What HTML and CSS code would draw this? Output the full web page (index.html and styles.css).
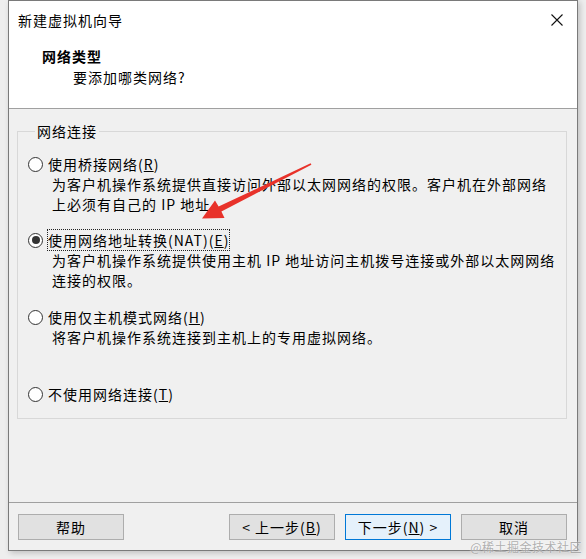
FILE: index.html
```html
<!DOCTYPE html>
<html lang="zh-CN">
<head>
<meta charset="utf-8">
<title>新建虚拟机向导</title>
<link rel="stylesheet" href="styles.css">
</head>
<body>
<div class="window">
  <div class="top">
    <div class="titlebar">
      <span class="title">新建虚拟机向导</span>
      <svg class="close" width="12" height="12" viewBox="0 0 12 12"><path d="M0.5 0.5 L11.5 11.5 M11.5 0.5 L0.5 11.5" stroke="#111" stroke-width="1.1" fill="none"/></svg>
    </div>
    <div class="header">
      <div class="h-title">网络类型</div>
      <div class="h-sub">要添加哪类网络?</div>
    </div>
  </div>
  <div class="body">
    <fieldset class="group">
      <legend>网络连接</legend>
      <div class="options">
        <div class="option">
          <div class="opt-row"><span class="radio"></span><span class="opt-label">使用桥接网络(<u>R</u>)</span></div>
          <div class="desc">为客户机操作系统提供直接访问外部以太网网络的权限。客户机在外部网络<br>上必须有自己的 IP 地址。</div>
        </div>
        <div class="option opt2">
          <div class="opt-row"><span class="radio checked"></span><span class="opt-label focused">使用网络地址转换(NAT)(<u>E</u>)</span></div>
          <div class="desc">为客户机操作系统提供使用主机 IP 地址访问主机拨号连接或外部以太网网络<br>连接的权限。</div>
        </div>
        <div class="option opt3">
          <div class="opt-row"><span class="radio"></span><span class="opt-label">使用仅主机模式网络(<u>H</u>)</span></div>
          <div class="desc">将客户机操作系统连接到主机上的专用虚拟网络。</div>
        </div>
        <div class="option opt4">
          <div class="opt-row"><span class="radio"></span><span class="opt-label">不使用网络连接(<u>T</u>)</span></div>
        </div>
      </div>
    </fieldset>
  </div>
  <div class="footer">
    <button class="btn">帮助</button>
    <div class="nav">
      <button class="btn">&lt; 上一步(<u>B</u>)</button>
      <button class="btn default">下一步(<u>N</u>) &gt;</button>
      <button class="btn">取消</button>
    </div>
  </div>
</div>
<svg class="arrow" width="586" height="559" viewBox="0 0 586 559">
  <polygon points="310.6,163.2 311.4,164.8 221.4,211.4 224.5,218 202,218.5 215,200.5 218.6,206.6" fill="#e8322a"/>
</svg>
<div class="watermark">@稀土掘金技术社区</div>
</body>
</html>
```

FILE: styles.css
```css
* { box-sizing: border-box; }
html, body { margin: 0; }
body {
  width: 586px;
  height: 559px;
  padding: 0 0 0 8px;
  position: relative;
  overflow: hidden;
  background: #eeeeee;
  font-family: "Noto Sans CJK SC", "Microsoft YaHei", sans-serif;
  font-size: 14px;
  letter-spacing: 1px;
  color: #000;
}
.window {
  width: 570px;
  height: 551px;
  border: 1px solid #7a7a7a;
  background: #f0f0f0;
  box-shadow: 2px 2px 6px rgba(0, 0, 0, 0.2);
  display: flex;
  flex-direction: column;
}
.top {
  height: 108px;
  background: #fff;
  border-bottom: 1px solid #a0a0a0;
}
.titlebar {
  height: 37px;
  display: flex;
  align-items: center;
  justify-content: space-between;
  padding: 0 14px 0 9px;
  line-height: 20px;
}
.close { display: block; }
.header {
  padding: 8px 0 0 33px;
  line-height: 20px;
}
.h-title { font-weight: bold; }
.h-sub { margin: 1px 0 0 31px; }
.body {
  flex: 1;
  padding: 12px 10px 0 8px;
}
.group {
  margin: 0;
  min-width: 0;
  border: 1px solid #d8d8d8;
  padding: 13px 0 14px 10px;
}
.group legend {
  margin-left: 7px;
  padding: 0 2px;
  line-height: 20px;
}
.options {
  display: flex;
  flex-direction: column;
}
.opt2 { margin-top: 16px; }
.opt3 { margin-top: 17px; }
.opt4 { margin-top: 37px; }
.opt-row {
  display: flex;
  align-items: center;
  gap: 5px;
  line-height: 20px;
  height: 20px;
}
.radio {
  width: 15px;
  height: 15px;
  flex-shrink: 0;
  border-radius: 50%;
  border: 1px solid #333;
  background: #fff;
  display: grid;
  place-items: center;
}
.radio.checked::after {
  content: "";
  width: 8px;
  height: 8px;
  border-radius: 50%;
  background: #333;
}
.opt-label { white-space: nowrap; }
.opt-label.focused {
  outline: 1px dotted #222;
  outline-offset: 0;
}
.desc {
  margin-left: 24px;
  line-height: 20px;
  white-space: nowrap;
}
.footer {
  height: 48px;
  border-top: 1px solid #a0a0a0;
  padding: 11px 10px 0 9px;
  display: flex;
  justify-content: space-between;
  align-items: flex-start;
}
.nav {
  display: flex;
  gap: 10px;
}
.btn {
  width: 106px;
  height: 26px;
  padding: 0;
  margin: 0;
  border: 1px solid #adadad;
  background: #e1e1e1;
  font: inherit;
  letter-spacing: 1px;
  line-height: 24px;
  color: #000;
}
.btn.default {
  border-color: #0078d7;
  background: #e5f1fb;
}
.arrow {
  position: absolute;
  left: 0;
  top: 0;
  pointer-events: none;
}
.watermark {
  position: absolute;
  right: 4px;
  bottom: 4px;
  font-size: 12px;
  line-height: 16px;
  letter-spacing: 0.5px;
  color: rgba(150, 150, 150, 0.75);
  text-shadow: 0 0 2px #fff;
  white-space: nowrap;
}
```
